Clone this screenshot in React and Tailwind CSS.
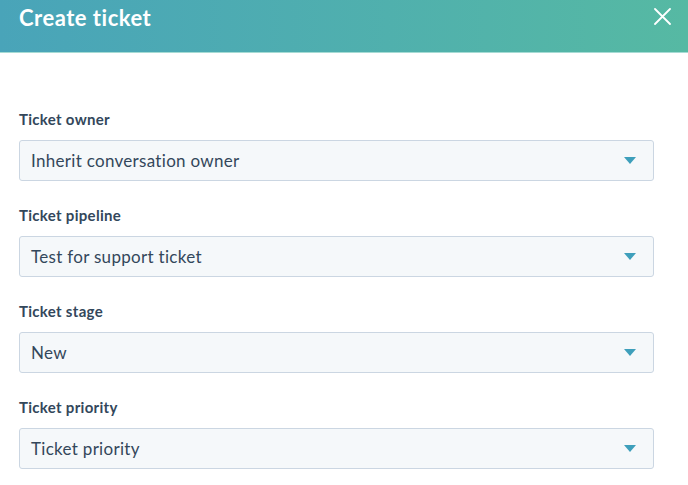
import React from 'react';

const fields = [
  { label: 'Ticket owner', value: 'Inherit conversation owner' },
  { label: 'Ticket pipeline', value: 'Test for support ticket' },
  { label: 'Ticket stage', value: 'New' },
  { label: 'Ticket priority', value: 'Ticket priority' },
];

const Caret = () => (
  <svg width="12" height="7" viewBox="0 0 12 7" className="shrink-0">
    <path d="M0 0h12L6 7z" fill="#3e9fbb" />
  </svg>
);

export default function App() {
  return (
    <div className="w-[688px] h-[485px] bg-white overflow-hidden font-['Lato',sans-serif] text-[#33475b]">
      {/* Header */}
      <div className="h-[53px] flex items-start justify-between pl-[19px] pr-[17px] bg-gradient-to-r from-[#49a4b9] to-[#56b9a3] border-b border-[#a6dbd4]">
        <h1 className="text-[22px] leading-none font-bold text-white mt-[7px] tracking-[0.5px]">Create ticket</h1>
        <button className="mt-[8px] text-white" aria-label="Close">
          <svg width="17" height="17" viewBox="0 0 17 17">
            <path d="M1 1l15 15M16 1L1 16" stroke="white" strokeWidth="1.8" strokeLinecap="round" />
          </svg>
        </button>
      </div>

      {/* Form */}
      <div className="flex flex-col gap-[25px] px-[19px] pt-[57px]">
        {fields.map((f) => (
          <div key={f.label} className="flex flex-col gap-[12px] w-[635px]">
            <label className="text-[15px] leading-[18px] font-bold tracking-[0.3px]">{f.label}</label>
            <div className="h-[41px] flex items-center justify-between pl-[11px] pr-[17px] bg-[#f5f8fa] border border-[#cbd6e2] rounded-[3px]">
              <span className="text-[17px] tracking-[0.3px]">{f.value}</span>
              <Caret />
            </div>
          </div>
        ))}
      </div>
    </div>
  );
}
